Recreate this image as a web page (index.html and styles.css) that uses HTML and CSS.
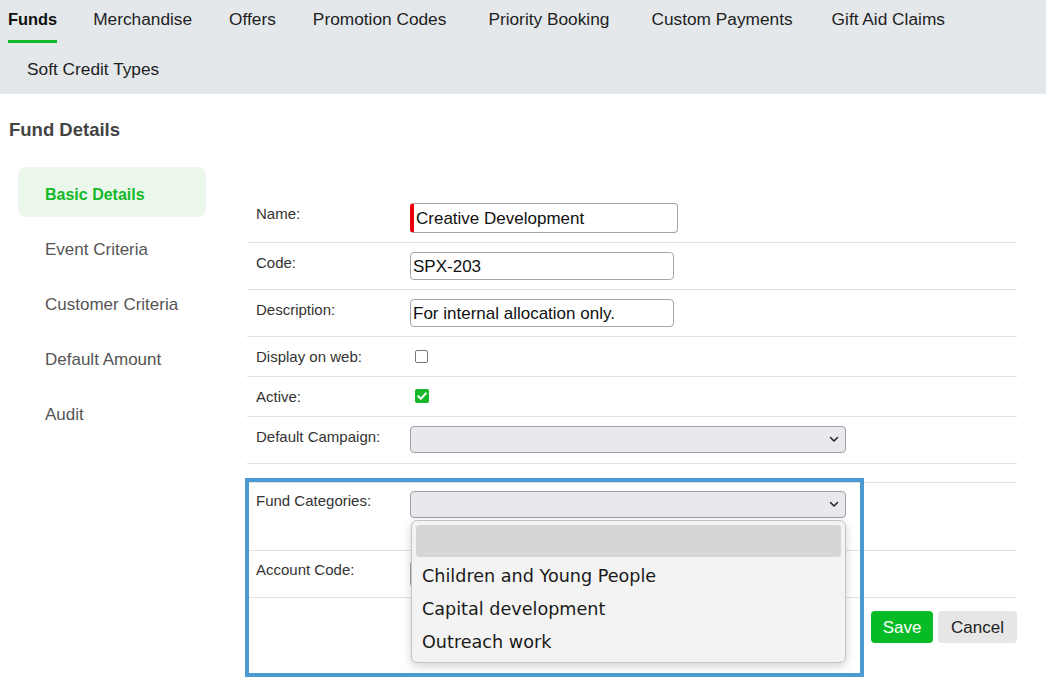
FILE: index.html
```html
<!DOCTYPE html>
<html>
<head>
<meta charset="utf-8">
<link rel="stylesheet" href="styles.css">
</head>
<body>
<nav class="tabs">
  <a class="tab active">Funds</a>
  <a class="tab">Merchandise</a>
  <a class="tab">Offers</a>
  <a class="tab wide-gap">Promotion Codes</a>
  <a class="tab wide-gap">Priority Booking</a>
  <a class="tab mid-gap">Custom Payments</a>
  <a class="tab">Gift Aid Claims</a>
  <a class="tab">Soft Credit Types</a>
</nav>
<main class="page">
  <h1 class="title">Fund Details</h1>
  <div class="layout">
    <ul class="side">
      <li class="side-item current">Basic Details</li>
      <li class="side-item">Event Criteria</li>
      <li class="side-item">Customer Criteria</li>
      <li class="side-item">Default Amount</li>
      <li class="side-item">Audit</li>
    </ul>
    <section class="form">
      <div class="row row-name">
        <label class="lbl">Name:</label>
        <div class="val"><div class="input required wide">Creative Development</div></div>
      </div>
      <div class="row">
        <label class="lbl">Code:</label>
        <div class="val"><div class="input">SPX-203</div></div>
      </div>
      <div class="row">
        <label class="lbl">Description:</label>
        <div class="val"><div class="input">For internal allocation only.</div></div>
      </div>
      <div class="row row-check">
        <label class="lbl">Display on web:</label>
        <div class="val"><span class="check"></span></div>
      </div>
      <div class="row row-check">
        <label class="lbl">Active:</label>
        <div class="val"><span class="check on"><svg width="14" height="14" viewBox="0 0 14 14"><path d="M3.3 7.2 L5.9 9.8 L10.8 4.3" fill="none" stroke="#fff" stroke-width="2" stroke-linecap="round" stroke-linejoin="round"/></svg></span></div>
      </div>
      <div class="row row-select">
        <label class="lbl">Default Campaign:</label>
        <div class="val"><div class="select"><svg width="10" height="7" viewBox="0 0 10 7"><path d="M1.5 1.5 L5 5 L8.5 1.5" fill="none" stroke="#222" stroke-width="1.5" stroke-linecap="round" stroke-linejoin="round"/></svg></div></div>
      </div>
      <div class="row row-spacer"></div>
      <div class="row row-cat">
        <label class="lbl">Fund Categories:</label>
        <div class="val drop-host">
          <div class="select"><svg width="10" height="7" viewBox="0 0 10 7"><path d="M1.5 1.5 L5 5 L8.5 1.5" fill="none" stroke="#222" stroke-width="1.5" stroke-linecap="round" stroke-linejoin="round"/></svg></div>
          <ul class="popup">
            <li class="opt sel"></li>
            <li class="opt">Children and Young People</li>
            <li class="opt">Capital development</li>
            <li class="opt">Outreach work</li>
          </ul>
        </div>
      </div>
      <div class="row row-acc">
        <label class="lbl">Account Code:</label>
        <div class="val"><div class="input"></div></div>
      </div>
      <div class="actions">
        <button class="btn save">Save</button>
        <button class="btn cancel">Cancel</button>
      </div>
    </section>
  </div>
</main>
<div class="highlight"></div>
</body>
</html>
```

FILE: styles.css
```css
* { box-sizing: border-box; }
html, body { margin: 0; padding: 0; }
body {
  position: relative;
  width: 1046px;
  height: 687px;
  overflow: hidden;
  background: #fff;
  font-family: "Liberation Sans", Arial, sans-serif;
  color: #222;
}
.tabs {
  display: flex;
  flex-wrap: wrap;
  row-gap: 7px;
  background: #e4e8eb;
  padding: 0 0 1px 8px;
  height: 94px;
}
.tab {
  display: block;
  margin: 0 18px 0 19px;
  height: 43px;
  padding-top: 9px;
  line-height: 21px;
  font-size: 17.3px;
  color: #1e1e1e;
  border-bottom: 3px solid transparent;
  white-space: nowrap;
}
.tab.wide-gap { margin-right: 23px; }
.tab.mid-gap { margin-right: 20px; }
.tab.active {
  margin-left: 0;
  margin-right: 17px;
  font-weight: bold;
  font-size: 16.4px;
  color: #111;
  border-bottom-color: #12b928;
}
.page { padding: 0 0 0 9px; }
.title {
  margin: 25px 0 0 0;
  font-size: 18.5px;
  line-height: 22px;
  font-weight: bold;
  color: #444;
}
.layout {
  display: flex;
  margin-top: 26px;
}
.side {
  list-style: none;
  margin: 0 0 0 9px;
  padding: 0;
  width: 188px;
  display: flex;
  flex-direction: column;
  gap: 5px;
}
.side-item {
  height: 50px;
  padding-top: 6px;
  line-height: 44px;
  padding-left: 27px;
  font-size: 17px;
  color: #555;
  border-radius: 8px;
}
.side-item.current {
  background: #ebf7eb;
  color: #14b829;
  font-weight: bold;
  font-size: 16px;
}
.form {
  margin-left: 41px;
  width: 770px;
  padding-top: 26px;
}
.row {
  display: grid;
  grid-template-columns: 163px 1fr;
  border-bottom: 1px solid #e2e2e2;
  padding: 9px 0 9px 0;
}
.row-name { padding: 10px 0 9px 0; }
.lbl {
  padding: 2px 0 0 9px;
  font-size: 15px;
  line-height: 18px;
  color: #333;
}
.val { position: relative; }
.input {
  width: 264px;
  height: 28px;
  border: 1px solid #a6a6a6;
  border-radius: 4px;
  padding: 0 2px;
  font-size: 17px;
  line-height: 28px;
  color: #111;
  background: #fff;
  white-space: nowrap;
}
.input.wide { width: 268px; height: 30px; line-height: 30px; }
.input.required { border-left: 4px solid #e8000b; }
.row-check { padding: 10px 0 10px 0; }
.row-check .lbl { padding-top: 1px; }
.check {
  display: block;
  margin: 3px 0 0 5px;
  width: 13px;
  height: 13px;
  border: 1px solid #767676;
  border-radius: 2px;
  background: #fff;
}
.check.on {
  width: 14px;
  height: 14px;
  margin-top: 2px;
  border: none;
  background: #16b82a;
}
.check.on svg { display: block; }
.row-select { padding: 9px 0 10px 0; }
.select {
  width: 436px;
  height: 27px;
  border: 1px solid #9e9ea6;
  border-radius: 4px;
  background: #e9e9ed;
  display: flex;
  align-items: center;
  justify-content: flex-end;
  padding-right: 6px;
}
.select svg { display: block; }
.row-spacer { height: 19px; padding: 0; }
.row-cat { height: 68px; padding: 8px 0 0 0; }
.row-cat .lbl { padding-top: 1px; }
.row-acc { padding: 9px 0 9px 0; height: 47px; }
.row-acc .lbl { padding-top: 1px; }
.drop-host { position: relative; }
.popup {
  position: absolute;
  left: 1px;
  top: 29px;
  width: 435px;
  height: 143px;
  margin: 0;
  padding: 4px 4px 0 4px;
  list-style: none;
  background: #f3f3f3;
  border: 1px solid #c4c4c4;
  border-radius: 6px;
  box-shadow: 0 3px 10px rgba(0,0,0,0.18);
  z-index: 5;
}
.opt {
  height: 33px;
  line-height: 33px;
  padding-left: 6px;
  font-family: "DejaVu Sans", sans-serif;
  font-size: 17.6px;
  color: #1a1a1a;
  white-space: nowrap;
}
.opt.sel {
  height: 32px;
  margin-bottom: 3px;
  background: #d6d6d6;
  border-radius: 3px;
}
.actions {
  display: flex;
  justify-content: flex-end;
  gap: 5px;
  padding-top: 13px;
}
.btn {
  height: 32px;
  border: none;
  border-radius: 4px;
  font-family: "Liberation Sans", Arial, sans-serif;
  font-size: 17px;
  padding: 2px 0 0 0;
}
.save { width: 62px; background: #06bb25; color: #fff; }
.cancel { width: 79px; background: #e6e6e6; color: #222; }
.highlight {
  position: absolute;
  left: 245px;
  top: 478px;
  width: 619px;
  height: 199px;
  border: 4px solid #4b9bd2;
  pointer-events: none;
  z-index: 4;
}
```
